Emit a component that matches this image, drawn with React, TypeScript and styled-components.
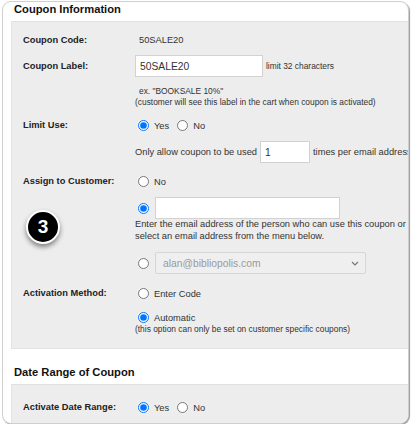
import React from 'react'
import styled, { createGlobalStyle } from 'styled-components'

const GlobalStyle = createGlobalStyle`
  html, body {
    margin: 0;
    padding: 0;
    background: #fff;
  }
  body {
    font-family: "Liberation Sans", Arial, sans-serif;
    color: #333;
  }
`

const Frame = styled.div`
  position: relative;
  box-sizing: border-box;
  margin: 1px 0 0 2px;
  width: 407px;
  height: 423px;
  border: 1px solid #cfcfcf;
  border-radius: 9px;
  box-shadow: 1px 1px 1px rgba(0, 0, 0, 0.4);
  background: #fff;
  overflow: hidden;
`

const SectionTitle = styled.div<{ $mt?: number }>`
  margin-top: ${(p) => p.$mt ?? 0}px;
  padding: 0 0 4px 11px;
  height: 15px;
  line-height: 15px;
  font-size: 11.2px;
  font-weight: 700;
  color: #111;
`

const Panel = styled.div<{ $pb?: number }>`
  margin-left: 8px;
  padding: 0 0 ${(p) => p.$pb ?? 0}px 11px;
  background: #ededed;
  border-top: 1px solid #e0e0e0;
  border-left: 1px solid #e3e3e3;
  border-bottom: 1px solid #e3e3e3;
`

const Line = styled.div<{ $h: number; $mt?: number }>`
  display: grid;
  grid-template-columns: 112px auto;
  align-items: center;
  height: ${(p) => p.$h}px;
  margin-top: ${(p) => p.$mt ?? 0}px;
  white-space: nowrap;
`

const Label = styled.div`
  font-size: 9.3px;
  font-weight: 700;
  color: #222;
`

const Cell = styled.div`
  display: flex;
  align-items: center;
  height: 100%;
  font-size: 9.3px;
  color: #333;
`

const Value = styled.span`
  padding-left: 4px;
`

const Note = styled.div<{ $indent?: number }>`
  grid-column: 2;
  padding-left: ${(p) => p.$indent ?? 0}px;
  font-size: 8.4px;
  line-height: 10px;
  color: #333;
`

const Help = styled.div`
  margin-left: 112px;
  font-size: 9.3px;
  line-height: 11.5px;
  color: #333;
  white-space: nowrap;
`

const TextBox = styled.input<{ $w: number }>`
  box-sizing: border-box;
  width: ${(p) => p.$w}px;
  height: 22px;
  margin: 0;
  padding: 0 4px;
  border: 1px solid #d2d2d2;
  border-radius: 0;
  background: #fff;
  font-family: "Liberation Sans", Arial, sans-serif;
  font-size: 10.3px;
  color: #333;
  outline: none;
`

const Radio = styled.input.attrs({ type: 'radio', readOnly: true })`
  width: 11px;
  height: 11px;
  margin: 0 0 0 3px;
  accent-color: #0075ff;
`

const RadioText = styled.span<{ $gap?: number }>`
  margin: 1px ${(p) => p.$gap ?? 0}px 0 5px;
`

const Suffix = styled.span`
  margin-left: 3px;
`

const Prefix = styled.span`
  margin-right: 3px;
`

const SelectBox = styled.div`
  box-sizing: border-box;
  display: flex;
  align-items: center;
  justify-content: space-between;
  width: 211px;
  height: 22px;
  margin-left: 6px;
  padding: 0 6px 0 7px;
  border: 1px solid #d6d6d6;
  border-radius: 2px;
  background: #efefef;
  font-size: 10.3px;
  color: #9a9a9a;
`

const Badge = styled.div`
  position: absolute;
  left: 23px;
  top: 208px;
  box-sizing: border-box;
  width: 34px;
  height: 34px;
  border: 2px solid #fff;
  border-radius: 50%;
  background: #000;
  box-shadow: 0 3px 5px rgba(0, 0, 0, 0.45);
  color: #fff;
  font-size: 19px;
  font-weight: 700;
  line-height: 30px;
  text-align: center;
`

function Chevron() {
  return (
    <svg width="8" height="5" viewBox="0 0 8 5" fill="none">
      <path d="M1 1l3 3 3-3" stroke="#777" strokeWidth="1.2" />
    </svg>
  )
}

export default function App() {
  return (
    <>
      <GlobalStyle />
      <Frame>
        <SectionTitle>Coupon Information</SectionTitle>
        <Panel $pb={14}>
          <Line $h={20} $mt={8}>
            <Label>Coupon Code:</Label>
            <Cell>
              <Value>50SALE20</Value>
            </Cell>
          </Line>
          <Line $h={22} $mt={5}>
            <Label>Coupon Label:</Label>
            <Cell>
              <TextBox $w={128} defaultValue="50SALE20" />
              <Note as="span" $indent={3} style={{ gridColumn: 'auto' }}>
                limit 32 characters
              </Note>
            </Cell>
          </Line>
          <Line $h={11} $mt={8}>
            <Note $indent={4}>ex. "BOOKSALE 10%"</Note>
          </Line>
          <Line $h={11}>
            <Note>(customer will see this label in the cart when coupon is activated)</Note>
          </Line>
          <Line $h={20} $mt={8}>
            <Label>Limit Use:</Label>
            <Cell>
              <Radio name="limit" defaultChecked />
              <RadioText $gap={5}>Yes</RadioText>
              <Radio name="limit" />
              <RadioText>No</RadioText>
            </Cell>
          </Line>
          <Line $h={22} $mt={6}>
            <div />
            <Cell>
              <Prefix>Only allow coupon to be used</Prefix>
              <TextBox $w={50} defaultValue="1" />
              <Suffix>times per email address</Suffix>
            </Cell>
          </Line>
          <Line $h={20} $mt={8}>
            <Label>Assign to Customer:</Label>
            <Cell>
              <Radio name="assign" />
              <RadioText>No</RadioText>
            </Cell>
          </Line>
          <Line $h={22} $mt={6}>
            <div />
            <Cell>
              <Radio name="assign" defaultChecked />
              <TextBox $w={185} style={{ marginLeft: 6 }} />
            </Cell>
          </Line>
          <Help>
            Enter the email address of the person who can use this coupon or
            <br />
            select an email address from the menu below.
          </Help>
          <Line $h={22} $mt={10}>
            <div />
            <Cell>
              <Radio name="assign" />
              <SelectBox>
                <span>alan@bibliopolis.com</span>
                <Chevron />
              </SelectBox>
            </Cell>
          </Line>
          <Line $h={20} $mt={9}>
            <Label>Activation Method:</Label>
            <Cell>
              <Radio name="activation" />
              <RadioText>Enter Code</RadioText>
            </Cell>
          </Line>
          <Line $h={14} $mt={7}>
            <div />
            <Cell>
              <Radio name="activation" defaultChecked />
              <RadioText>Automatic</RadioText>
            </Cell>
          </Line>
          <Line $h={10}>
            <Note>(this option can only be set on customer specific coupons)</Note>
          </Line>
        </Panel>

        <SectionTitle $mt={16}>Date Range of Coupon</SectionTitle>
        <Panel>
          <Line $h={20} $mt={12}>
            <Label>Activate Date Range:</Label>
            <Cell>
              <Radio name="range" defaultChecked />
              <RadioText $gap={5}>Yes</RadioText>
              <Radio name="range" />
              <RadioText>No</RadioText>
            </Cell>
          </Line>
          <Line $h={22} $mt={8}>
            <div />
            <Cell>
              <TextBox $w={66} />
            </Cell>
          </Line>
        </Panel>

        <Badge>3</Badge>
      </Frame>
    </>
  )
}
